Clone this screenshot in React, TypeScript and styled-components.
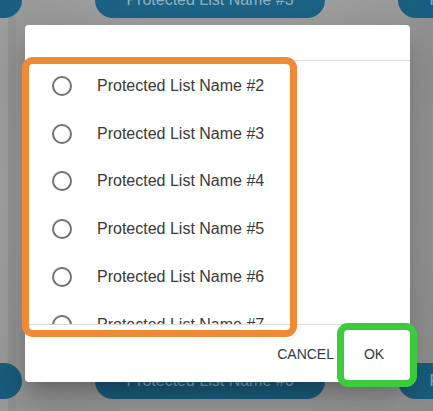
import React from "react";
import styled, { createGlobalStyle } from "styled-components";

const Global = createGlobalStyle`
  html, body { margin: 0; padding: 0; }
  body {
    width: 433px;
    height: 411px;
    overflow: hidden;
    background: #a1a1a1;
    font-family: "Liberation Sans", Arial, sans-serif;
  }
`;

const Page = styled.div`
  position: relative;
  width: 433px;
  height: 411px;
  overflow: hidden;
  background: linear-gradient(90deg, #a8a8a8 0px, #a8a8a8 8px, #9d9d9d 8px, #9d9d9d 16px, #a3a3a3 16px, #a3a3a3 400px, #999 433px);
`;

const PillGrid = styled.div`
  display: grid;
  grid-template-columns: repeat(3, 230px);
  grid-template-rows: 36px 36px;
  column-gap: 73px;
  row-gap: 345px;
  margin-left: -208px;
  margin-top: -18px;
`;

const Pill = styled.div`
  height: 36px;
  border-radius: 18px;
  background: #1c6588;
  color: rgba(220, 235, 245, 0.62);
  font-size: 16px;
  display: flex;
  align-items: center;
  justify-content: center;
`;

const Overlay = styled.div`
  position: absolute;
  inset: 0;
  background: radial-gradient(ellipse at 50% 45%, rgba(0,0,0,0) 55%, rgba(0,0,0,0.08) 100%);
`;

const Dialog = styled.div`
  position: absolute;
  left: 25px;
  top: 25px;
  width: 385px;
  height: 357px;
  background: #fff;
  border-radius: 4px;
  box-shadow: 0 11px 15px -7px rgba(0,0,0,0.2), 0 24px 38px 3px rgba(0,0,0,0.14), 0 9px 46px 8px rgba(0,0,0,0.12);
  display: flex;
  flex-direction: column;
  overflow: hidden;
`;

const Header = styled.div`
  height: 35px;
  flex: none;
  border-bottom: 1px solid #dcdcdc;
`;

const List = styled.div`
  height: 264px;
  flex: none;
  overflow: hidden;
  box-sizing: border-box;
  padding-top: 1px;
  border-bottom: 1px solid #dcdcdc;
`;

const Row = styled.div`
  height: 47.8px;
  display: flex;
  align-items: center;
  padding-left: 27px;
`;

const RadioRing = styled.span`
  width: 20px;
  height: 20px;
  box-sizing: border-box;
  border: 2px solid #707070;
  border-radius: 50%;
  flex: none;
`;

const Label = styled.span`
  margin-left: 25px;
  font-size: 16px;
  color: #383838;
  white-space: nowrap;
`;

const Footer = styled.div`
  flex: 1;
  display: flex;
  align-items: center;
  justify-content: flex-end;
  padding-right: 4px;
  gap: 0;
`;

const Button = styled.button`
  min-width: 64px;
  height: 36px;
  padding: 6px 8px;
  border: none;
  background: transparent;
  font-family: "Liberation Sans", Arial, sans-serif;
  font-size: 14px;
  color: #2b3a4d;
  text-transform: uppercase;
  cursor: pointer;
`;

const Highlight = styled.div<{ $color: string }>`
  position: absolute;
  box-sizing: border-box;
  border: 7px solid ${(p) => p.$color};
  border-radius: 11px;
  pointer-events: none;
`;

const names = [2, 3, 4, 5, 6, 7];

export default function App() {
  return (
    <>
      <Global />
      <Page>
        <PillGrid>
          <Pill>Protected List Name #2</Pill>
          <Pill>Protected List Name #3</Pill>
          <Pill>Protected List Name #4</Pill>
          <Pill>Protected List Name #5</Pill>
          <Pill>Protected List Name #6</Pill>
          <Pill>Protected List Name #7</Pill>
        </PillGrid>
        <Overlay />
        <Dialog>
          <Header />
          <List>
            {names.map((n) => (
              <Row key={n}>
                <RadioRing />
                <Label>Protected List Name #{n}</Label>
              </Row>
            ))}
          </List>
          <Footer>
            <Button>Cancel</Button>
            <Button>OK</Button>
          </Footer>
        </Dialog>
        <Highlight $color="#ef8b36" style={{ left: 22, top: 57, width: 275, height: 280 }} />
        <Highlight $color="#3ccb3c" style={{ left: 337, top: 323, width: 80, height: 64 }} />
      </Page>
    </>
  );
}
